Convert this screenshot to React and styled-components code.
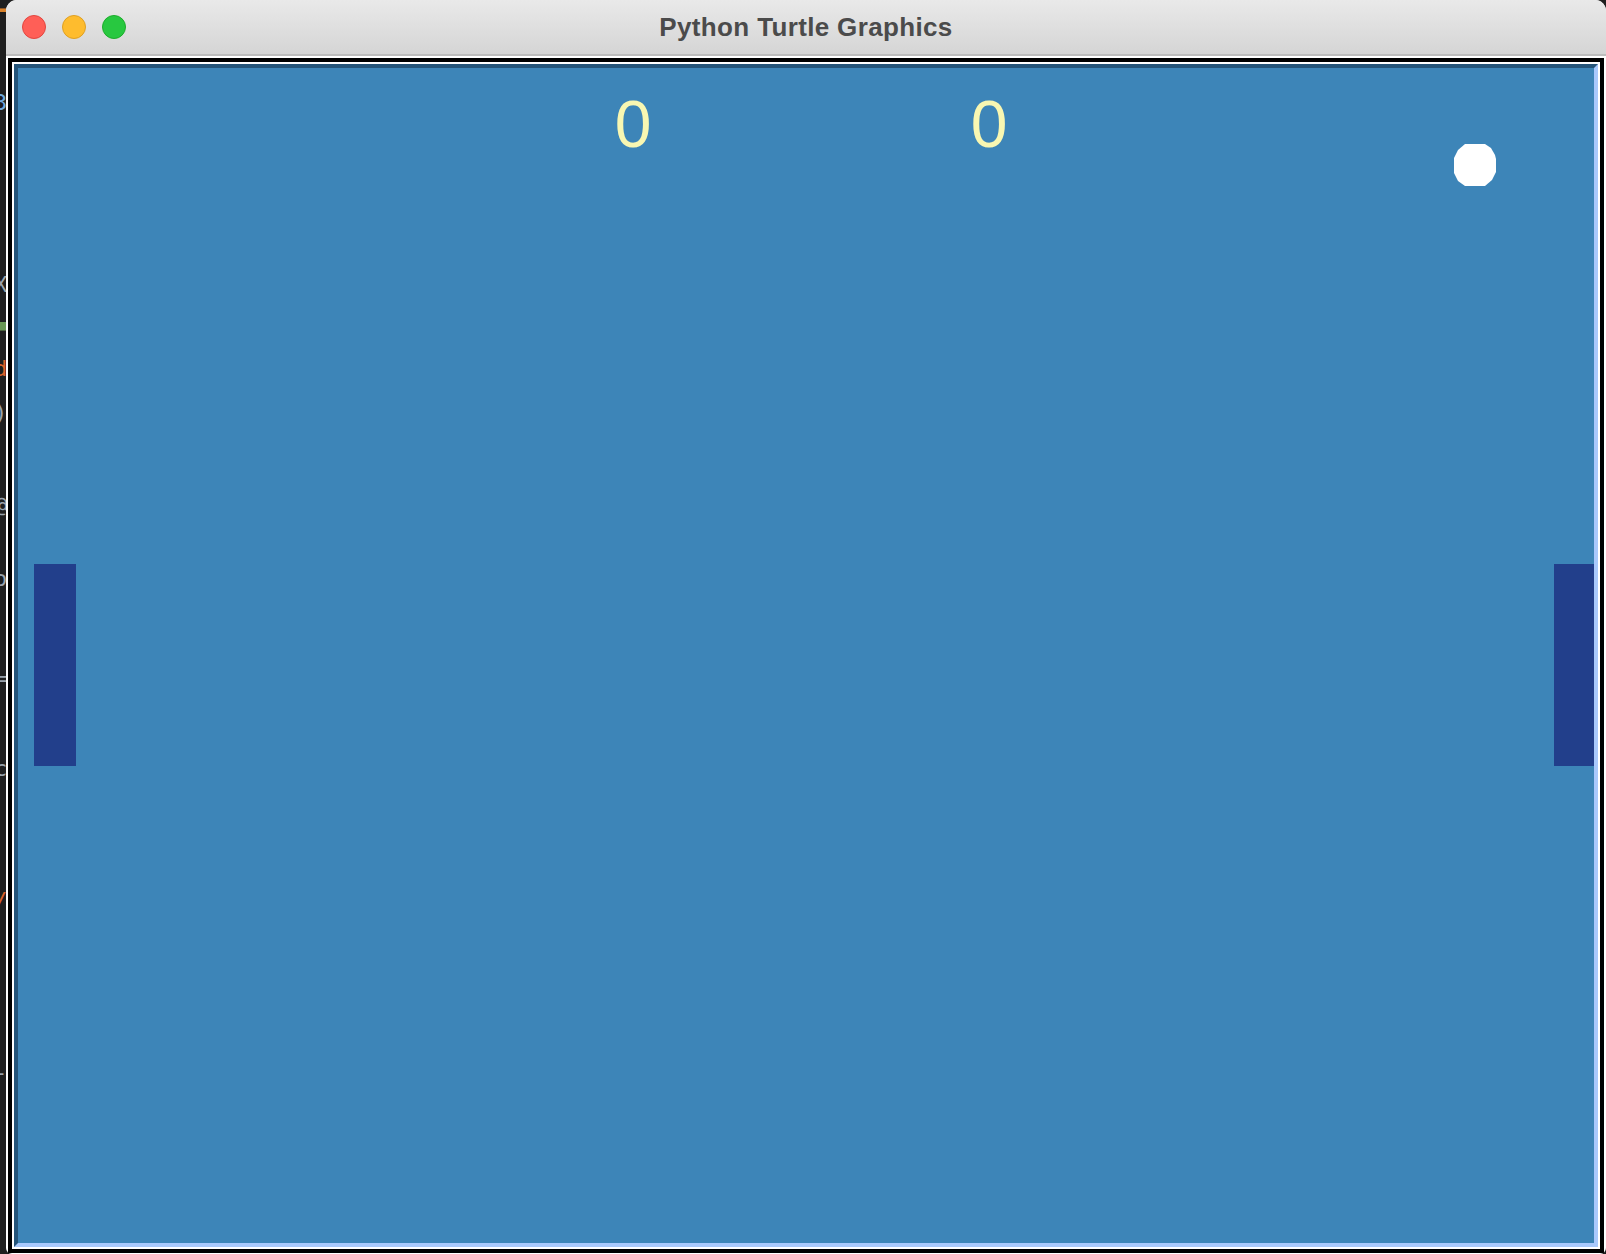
import React from 'react';
import styled, { createGlobalStyle } from 'styled-components';

const GlobalStyle = createGlobalStyle`
  html, body {
    margin: 0;
    padding: 0;
    background: #1f1f1f;
    overflow: hidden;
  }
  body {
    font-family: 'Liberation Sans', Arial, sans-serif;
  }
`;

const Page = styled.div`
  display: flex;
  width: 1606px;
  height: 1254px;
  background: #1f1f1f;
`;

const EditorStrip = styled.div`
  width: 6px;
  height: 100%;
  overflow: hidden;
  display: flex;
  flex-direction: column;
  font-family: 'DejaVu Sans Mono', monospace;
  font-size: 22px;
  line-height: 1;
`;

const CodeBit = styled.div`
  margin-top: ${(props) => props.gap}px;
  margin-left: ${(props) => props.shift || -6}px;
  color: ${(props) => props.color || '#9aa3ad'};
  white-space: nowrap;
`;

const Window = styled.div`
  width: 1600px;
  height: 1254px;
  display: flex;
  flex-direction: column;
  background: #ffffff;
  border-radius: 11px 11px 6px 6px;
  overflow: hidden;
`;

const TitleBar = styled.div`
  height: 54px;
  flex: none;
  display: grid;
  grid-template-columns: 1fr auto 1fr;
  align-items: center;
  background: linear-gradient(#e9e9e9, #d5d5d5);
  border-bottom: 2px solid #bdbdbd;
`;

const Lights = styled.div`
  display: flex;
  gap: 16px;
  padding-left: 16px;
`;

const Light = styled.span`
  box-sizing: border-box;
  width: 24px;
  height: 24px;
  border-radius: 50%;
  background: ${(props) => props.fill};
  border: 1px solid ${(props) => props.edge};
`;

const Title = styled.div`
  font-family: 'Liberation Sans', Arial, sans-serif;
  font-weight: bold;
  font-size: 26px;
  letter-spacing: 0.35px;
  color: #4b4b4b;
  line-height: 54px;
`;

const Body = styled.div`
  flex: 1;
  display: flex;
  padding: 2px 2px 1px 2px;
`;

const Frame = styled.div`
  flex: 1;
  display: flex;
  border: 4px solid #000;
  padding: 2px;
  background: #ffffff;
`;

const Canvas = styled.div`
  flex: 1;
  position: relative;
  overflow: hidden;
  background: #3d85b8;
  border-style: solid;
  border-width: 4px;
  border-color: #245479 #a9c9fc #a9c9fc #245479;
`;

const Score = styled.div`
  position: absolute;
  top: 23px;
  left: ${(props) => props.center - 60}px;
  width: 120px;
  text-align: center;
  font-family: 'Liberation Sans', Arial, sans-serif;
  font-size: 66px;
  line-height: 1;
  color: #f8f7b2;
`;

const Paddle = styled.div`
  position: absolute;
  top: 496px;
  left: ${(props) => props.left}px;
  width: 42px;
  height: 202px;
  background: #223f8b;
`;

const Ball = styled.svg`
  position: absolute;
  left: 1436px;
  top: 76px;
`;

const codeBits = [
  { gap: 0, color: '#d9822b', text: '━' },
  { gap: 70, color: '#6fa8dc', text: '3' },
  { gap: 160, text: 'X' },
  { gap: 18, color: '#6a9955', text: '▪', shift: -4 },
  { gap: 22, color: '#d9622b', text: 'd' },
  { gap: 22, text: ')' },
  { gap: 70, text: '@' },
  { gap: 52, text: 'o' },
  { gap: 78, text: '=' },
  { gap: 68, text: 'c' },
  { gap: 110, color: '#d9622b', text: '/' },
  { gap: 150, text: '-' },
];

const App = () => {
  return (
    <>
      <GlobalStyle />
      <Page>
        <EditorStrip>
          {codeBits.map((bit, i) => (
            <CodeBit key={i} gap={bit.gap} color={bit.color} shift={bit.shift}>
              {bit.text}
            </CodeBit>
          ))}
        </EditorStrip>
        <Window>
          <TitleBar>
            <Lights>
              <Light fill="#ff5f57" edge="#e2463f" />
              <Light fill="#febc2e" edge="#dfa023" />
              <Light fill="#28c840" edge="#1dad2b" />
            </Lights>
            <Title>Python Turtle Graphics</Title>
            <div />
          </TitleBar>
          <Body>
            <Frame>
              <Canvas>
                <Score center={615}>0</Score>
                <Score center={971}>0</Score>
                <Ball width="42" height="42" viewBox="0 0 42 42">
                  <polygon
                    fill="#ffffff"
                    points="11,0 31,0 37,4 41,11 42,15 42,28 38,36 31,42 11,42 4,37 0,29 0,14 4,6"
                  />
                </Ball>
                <Paddle left={16} />
                <Paddle left={1536} />
              </Canvas>
            </Frame>
          </Body>
        </Window>
      </Page>
    </>
  );
};

export default App;
